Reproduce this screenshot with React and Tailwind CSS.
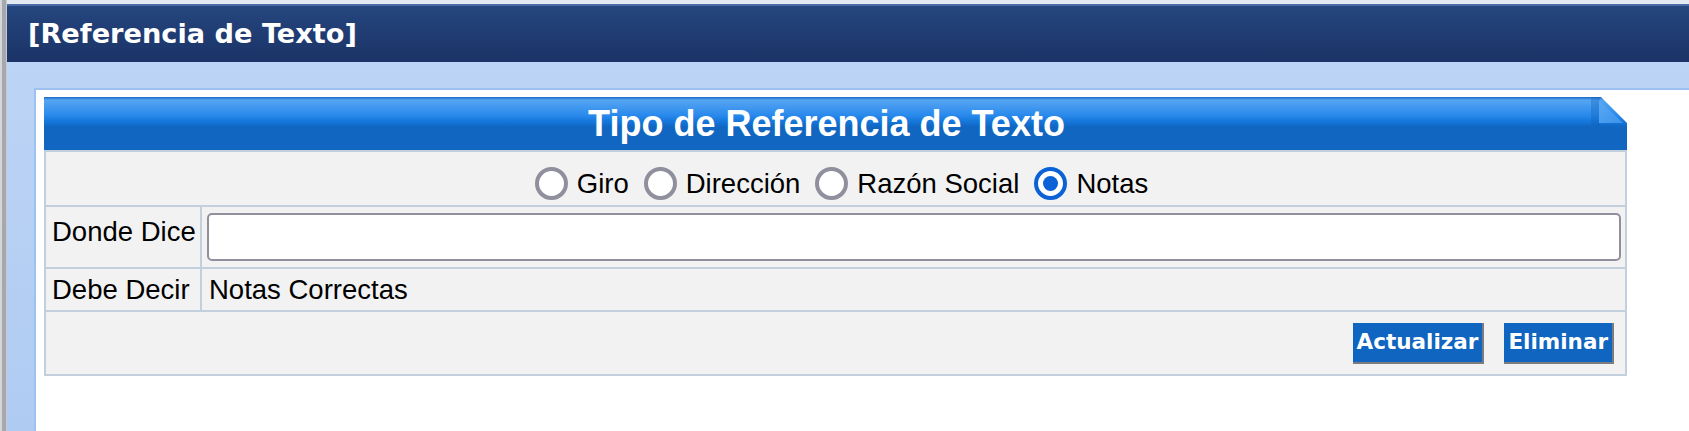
import React from 'react'

const sans = { fontFamily: '"Liberation Sans", Arial, sans-serif' }
const tahoma = { fontFamily: '"DejaVu Sans", Verdana, sans-serif' }

function Radio({ label, checked }) {
  return (
    <label className="flex items-center gap-[9px]">
      {checked ? (
        <span className="w-[33px] h-[33px] rounded-full border-[4px] border-[#0b62d6] bg-white flex items-center justify-center">
          <span className="w-[15px] h-[15px] rounded-full bg-[#0b62d6]" />
        </span>
      ) : (
        <span className="w-[33px] h-[33px] rounded-full border-[4px] border-[#8f8f9d] bg-white" />
      )}
      <span>{label}</span>
    </label>
  )
}

function DogEar() {
  return (
    <svg className="absolute top-0 right-0" width="36" height="29" viewBox="0 0 36 29">
      <defs>
        <linearGradient id="fold" x1="0" y1="0" x2="1" y2="1">
          <stop offset="0" stopColor="#5aa8f3" />
          <stop offset="1" stopColor="#3b93ec" />
        </linearGradient>
      </defs>
      <rect x="0" y="0" width="9" height="29" fill="#0f62bb" opacity="0.35" />
      <polygon points="10,0 36,0 36,26" fill="#ffffff" />
      <polygon points="8,3 8,26 32,26" fill="url(#fold)" />
    </svg>
  )
}

export default function App() {
  return (
    <div className="w-[1689px] h-[431px] flex overflow-hidden bg-white" style={sans}>
      <div className="w-[7px] flex">
        <div className="w-[2px] bg-[#d4d6da]" />
        <div className="w-[4px] bg-[#a6a8ac]" />
        <div className="w-[1px] bg-[#c6cad2]" />
      </div>
      <div className="flex-1 flex flex-col">
        <div className="h-[4px] bg-[#e4e8f0]" />
        <div className="h-[58px] flex items-center pl-[21px] border-t-2 border-[#4a6ca6] bg-gradient-to-b from-[#25467f] to-[#1b3366]">
          <h1 className="text-white font-bold text-[27.2px] leading-none" style={tahoma}>
            [Referencia de Texto]
          </h1>
        </div>
        <div className="flex-1 bg-gradient-to-b from-[#bcd4f5] to-[#b0cbf2] pt-[26px] pl-[27px]">
          <div className="h-full bg-white border-l-2 border-t-2 border-[#9cc2f2] pt-[7px] pl-[8px]">
            <div className="w-[1583px] text-[27.5px] text-black">
              <div className="relative h-[53px] flex items-center justify-center pr-[18px] bg-[linear-gradient(to_bottom,#1a68c4_0px,#56a5f2_3px,#2a8aec_18px,#1475da_25px,#1066c0_30px,#1066c0_100%)]">
                <h2 className="text-white font-bold text-[36px] leading-none">Tipo de Referencia de Texto</h2>
                <DogEar />
              </div>
              <div className="border-2 border-[#c2cfdd] bg-[#f2f2f2]">
                <div className="h-[53px] flex items-end justify-center gap-[15px] pb-[1px] pl-[12px]">
                  <Radio label="Giro" />
                  <Radio label="Dirección" />
                  <Radio label="Razón Social" />
                  <Radio label="Notas" checked />
                </div>
                <div className="flex h-[62px] border-t-2 border-[#c2cfdd]">
                  <div className="w-[156px] pl-[6px] pt-[4px] border-r-2 border-[#c2cfdd]">Donde Dice</div>
                  <div className="flex-1 py-[6px] pl-[5px] pr-[4px]">
                    <input
                      type="text"
                      className="w-full h-[48px] bg-white border-2 border-[#8f8f9d] rounded-[5px] px-2 outline-none"
                    />
                  </div>
                </div>
                <div className="flex h-[43px] border-t-2 border-[#c2cfdd]">
                  <div className="w-[156px] pl-[6px] flex items-center border-r-2 border-[#c2cfdd]">Debe Decir</div>
                  <div className="flex-1 pl-[7px] flex items-center">Notas Correctas</div>
                </div>
                <div className="h-[64px] border-t-2 border-[#c2cfdd] flex items-center justify-end gap-[20px] pr-[11px]">
                  <button
                    className="h-[41px] px-[4px] bg-[#0f65c0] text-white font-bold text-[21.5px] border-r-2 border-b-2 border-[#7c7c80]"
                    style={tahoma}
                  >
                    Actualizar
                  </button>
                  <button
                    className="h-[41px] px-[4px] bg-[#0f65c0] text-white font-bold text-[21.5px] border-r-2 border-b-2 border-[#7c7c80]"
                    style={tahoma}
                  >
                    Eliminar
                  </button>
                </div>
              </div>
            </div>
          </div>
        </div>
      </div>
    </div>
  )
}
